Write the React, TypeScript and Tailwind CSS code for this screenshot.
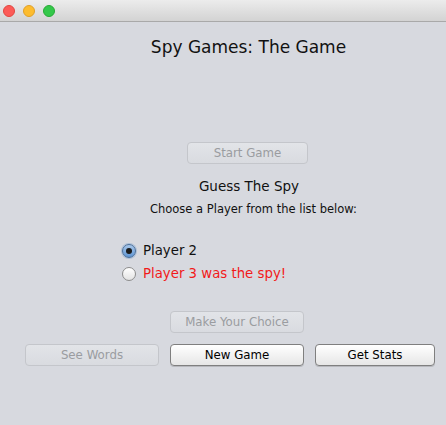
const font = { fontFamily: '"DejaVu Sans", "Liberation Sans", sans-serif' };

function MacButton({
    label,
    width,
    disabled,
    className = "",
}: {
    label: string;
    width: string;
    disabled?: boolean;
    className?: string;
}) {
    return (
        <div
            className={`${width} h-[22px] rounded-[4px] flex items-center justify-center text-[11.8px] pt-[1px] ${
                disabled
                    ? "border border-[#c4c6cb] bg-gradient-to-b from-[#e2e4e8] to-[#d9dbe0] text-[#9a9ca0]"
                    : "border border-[#7f7f7f] bg-gradient-to-b from-[#ffffff] to-[#e6e6e6] text-black shadow-[0_1px_0_rgba(0,0,0,0.15)]"
            } ${className}`}
        >
            {label}
        </div>
    );
}

function Radio({ checked }: { checked?: boolean }) {
    return checked ? (
        <div className="w-[14px] h-[14px] rounded-full border border-[#4b6f9a] bg-gradient-to-b from-[#a9c8ea] to-[#5f95d3] flex items-center justify-center shadow-[0_0_0_1px_rgba(90,140,200,0.35)]">
            <div className="w-[6px] h-[6px] rounded-full bg-[#1b1b1b]" />
        </div>
    ) : (
        <div className="w-[14px] h-[14px] rounded-full border border-[#8c8c8c] bg-gradient-to-b from-[#ffffff] to-[#e3e3e3]" />
    );
}

export default function App() {
    return (
        <div className="w-[446px] h-[425px] bg-[#d7d9df] flex flex-col" style={font}>
            {/* title bar */}
            <div className="h-[22px] bg-gradient-to-b from-[#ececec] to-[#d3d3d3] border-b border-[#a9a9a9] flex items-center gap-[8px] pl-[3px]">
                <div className="w-[12px] h-[12px] rounded-full bg-[#fc5b57] border border-[#e2463f]" />
                <div className="w-[12px] h-[12px] rounded-full bg-[#fdbc2e] border border-[#e0a027]" />
                <div className="w-[12px] h-[12px] rounded-full bg-[#34c84a] border border-[#27aa35]" />
            </div>

            <div className="h-[14px]" />
            <div className="h-[22px] flex justify-center pl-[51px] text-[17px] text-[#111] leading-[22px]">
                Spy Games: The Game
            </div>

            <div className="h-[84px]" />
            <MacButton label="Start Game" width="w-[121px]" disabled className="ml-[187px]" />

            <div className="h-[12px]" />
            <div className="h-[20px] flex justify-center pl-[52px] text-[13.5px] leading-[20px] text-[#111]">
                Guess The Spy
            </div>
            <div className="h-[4px]" />
            <div className="h-[18px] flex justify-center pl-[61px] text-[11.5px] leading-[18px] text-[#111]">
                Choose a Player from the list below:
            </div>

            <div className="h-[23px]" />
            <div className="h-[20px] flex items-center ml-[122px] gap-[7px] text-[13.3px] text-[#111]">
                <Radio checked />
                <span>Player 2</span>
            </div>
            <div className="h-[3px]" />
            <div className="h-[20px] flex items-center ml-[122px] gap-[7px] text-[13.3px] text-[#f21a1a]">
                <Radio />
                <span>Player 3 was the spy!</span>
            </div>

            <div className="h-[27px]" />
            <MacButton label="Make Your Choice" width="w-[134px]" disabled className="ml-[170px]" />

            <div className="h-[11px]" />
            <div className="flex ml-[25px] gap-[11px]">
                <MacButton label="See Words" width="w-[134px]" disabled />
                <MacButton label="New Game" width="w-[134px]" />
                <MacButton label="Get Stats" width="w-[120px]" />
            </div>
        </div>
    );
}
